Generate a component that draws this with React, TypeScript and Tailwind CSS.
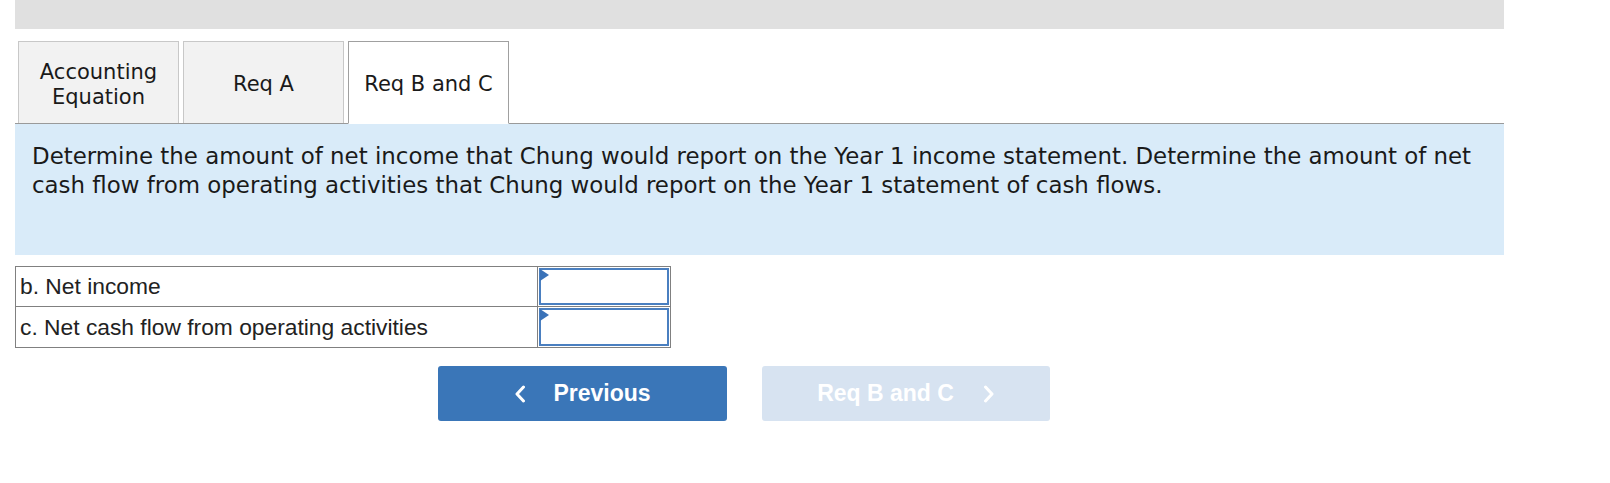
import React from 'react'

const tabs = [
  { id: 'eq', label: ['Accounting', 'Equation'] },
  { id: 'a', label: ['Req A'] },
  { id: 'bc', label: ['Req B and C'] },
]

const rows = [
  { id: 'b', label: 'b. Net income' },
  { id: 'c', label: 'c. Net cash flow from operating activities' },
]

function Tab({ label, active }: { label: string[]; active?: boolean }) {
  return (
    <div
      className={
        active
          ? 'w-[161px] h-[83px] -mb-px pt-[4px] flex flex-col items-center justify-center bg-white border border-[#a0a0a0] border-b-white text-[#1a1a1a]'
          : 'w-[161px] h-[82px] pt-[4px] flex flex-col items-center justify-center bg-[#f2f2f2] border border-[#c8c8c8] border-b-0 text-[#1a1a1a]'
      }
    >
      {label.map((l) => (
        <span key={l} className="leading-[25px]">{l}</span>
      ))}
    </div>
  )
}

function AnswerRow({ label, last }: { label: string; last?: boolean }) {
  return (
    <div className={'flex h-[40px]' + (last ? '' : ' border-b border-[#808080]')}>
      <div className="w-[522px] flex items-center pl-[4px] border-r border-[#808080] font-['Liberation_Sans',Arial,sans-serif] text-[22.8px] text-[#222]">
        {label}
      </div>
      <div className="flex-1 p-px">
        <div className="relative h-full border-2 border-[#4a7fc0]">
          <span className="absolute -left-px -top-px w-0 h-0 border-t-[6px] border-b-[6px] border-l-[9px] border-t-transparent border-b-transparent border-l-[#3a72b8]" />
        </div>
      </div>
    </div>
  )
}

function Chevron({ dir }: { dir: 'left' | 'right' }) {
  return (
    <svg width="12" height="18" viewBox="0 0 12 18" fill="none">
      <path
        d={dir === 'left' ? 'M9.5 2 L3 9 L9.5 16' : 'M2.5 2 L9 9 L2.5 16'}
        stroke="white"
        strokeWidth="3"
        strokeLinecap="round"
        strokeLinejoin="round"
      />
    </svg>
  )
}

export default function App() {
  return (
    <div className="w-[1610px] h-[483px] bg-white font-['DejaVu_Sans',Verdana,sans-serif]">
      <div className="ml-[15px] w-[1489px]">
        <div className="h-[29px] bg-[#e0e0e0]" />

        {/* Tabs */}
        <div className="mt-[12px] pl-[3px] flex gap-[4px] items-end border-b border-[#9a9a9a] text-[21px]">
          {tabs.map((t) => (
            <Tab key={t.id} label={t.label} active={t.id === 'bc'} />
          ))}
        </div>

        {/* Question */}
        <div className="h-[131px] bg-[#d9ebf9] px-[17px] pt-[18px] text-[22.9px] leading-[29px] text-[#1a1a1a]">
          Determine the amount of net income that Chung would report on the Year 1 income statement. Determine the amount of net cash flow from operating activities that Chung would report on the Year 1 statement of cash flows.
        </div>

        {/* Answer table */}
        <div className="mt-[11px] w-[656px] border border-[#808080]">
          {rows.map((r, i) => (
            <AnswerRow key={r.id} label={r.label} last={i === rows.length - 1} />
          ))}
        </div>

        {/* Nav buttons */}
        <div className="mt-[18px] ml-[423px] flex gap-[35px] font-['Liberation_Sans',Arial,sans-serif] font-bold text-[23px] text-white">
          <button className="w-[289px] h-[55px] rounded-[3px] bg-[#3a76b8] flex items-center justify-center gap-[27px]">
            <Chevron dir="left" />
            <span>Previous</span>
          </button>
          <button disabled className="w-[288px] h-[55px] rounded-[3px] bg-[#d7e3f1] flex items-center justify-center gap-[29px]">
            <span>Req B and C</span>
            <Chevron dir="right" />
          </button>
        </div>
      </div>
    </div>
  )
}
